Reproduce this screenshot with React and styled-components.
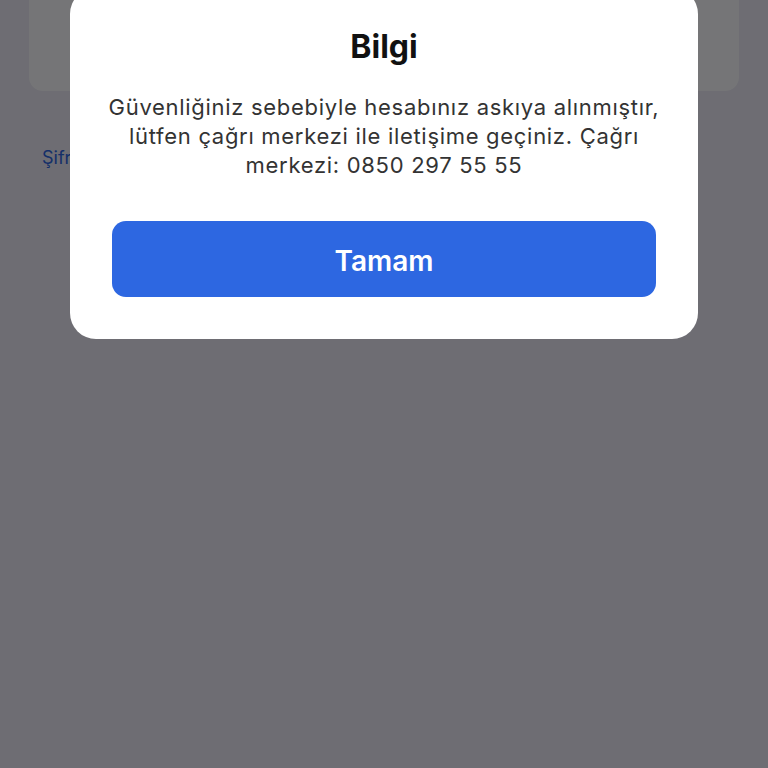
import React from "react";
import styled, { createGlobalStyle } from "styled-components";

const Global = createGlobalStyle`
  html, body { margin: 0; padding: 0; }
  body { font-family: Inter, "Noto Sans", "Liberation Sans", sans-serif; -webkit-font-smoothing: antialiased; }
  * { box-sizing: border-box; }
`;

const Screen = styled.div`
  position: relative;
  width: 768px;
  height: 768px;
  overflow: hidden;
  background: #efeef6;
  padding: 0 29px;
`;

const FormCard = styled.div`
  margin-top: -40px;
  height: 131px;
  background: #ffffff;
  border-radius: 14px;
`;

const LinkRow = styled.div`
  padding: 55px 0 0 13px;
`;

const TextLink = styled.a`
  font-size: 18px;
  line-height: 24px;
  color: #2d67e1;
  text-decoration: none;
`;

const Overlay = styled.div`
  position: absolute;
  inset: 0;
  background: rgba(0, 0, 4, 0.54);
`;

const Dialog = styled.div`
  position: absolute;
  top: -12px;
  left: 70px;
  width: 628px;
  background: #ffffff;
  border-radius: 26px;
  padding: 40px 42px 42px;
  display: flex;
  flex-direction: column;
  align-items: center;
`;

const Title = styled.h2`
  margin: 0;
  font-size: 32px;
  line-height: 38px;
  font-weight: 700;
  color: #111111;
`;

const Message = styled.p`
  margin: 27px -13px 0;
  width: 570px;
  font-size: 22px;
  line-height: 29px;
  letter-spacing: 0.7px;
  font-weight: 400;
  color: #333333;
  text-align: center;
`;

const PrimaryButton = styled.button`
  margin-top: 41px;
  width: 100%;
  height: 76px;
  border: none;
  border-radius: 14px;
  background: #2d67e1;
  color: #ffffff;
  font-family: inherit;
  font-size: 28px;
  font-weight: 600;
  padding: 3px 0 0;
  cursor: pointer;
`;

export default function App() {
  return (
    <>
      <Global />
      <Screen>
        <FormCard />
        <LinkRow>
          <TextLink href="#">Şifremi unuttum</TextLink>
        </LinkRow>
        <Overlay />
        <Dialog role="dialog">
          <Title>Bilgi</Title>
          <Message>
            Güvenliğiniz sebebiyle hesabınız askıya alınmıştır, lütfen çağrı
            merkezi ile iletişime geçiniz. Çağrı merkezi: 0850 297 55 55
          </Message>
          <PrimaryButton>Tamam</PrimaryButton>
        </Dialog>
      </Screen>
    </>
  );
}
